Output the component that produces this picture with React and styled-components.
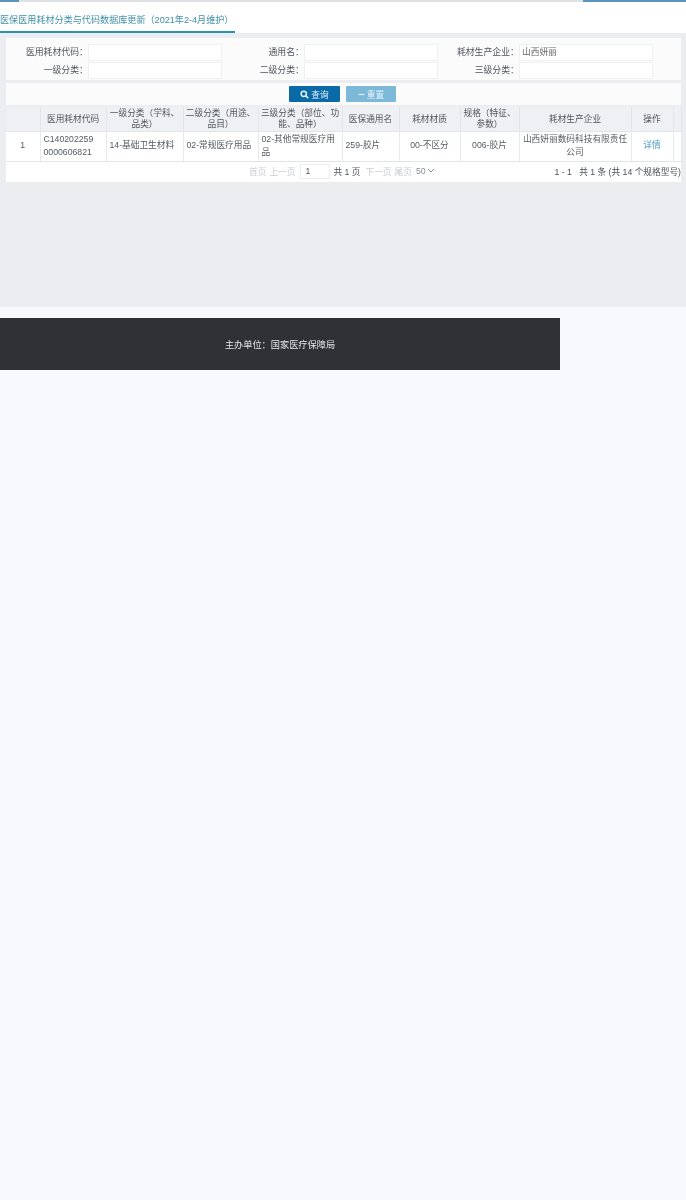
import styled, { createGlobalStyle } from 'styled-components'

const GlobalStyle = createGlobalStyle`
  html, body {
    margin: 0;
    padding: 0;
    background: #f8f9fd;
  }
  body {
    font-family: "Liberation Sans", "Noto Sans CJK SC", sans-serif;
    font-size: 8.7px;
    color: #50555b;
  }
`

const Page = styled.div`
  width: 686px;
  height: 1200px;
  overflow: hidden;
  background: #f8f9fd;
  filter: blur(0.45px);
`

const TopEdge = styled.div`
  display: flex;
  justify-content: space-between;
  height: 2px;
  background: #dfe1e4;
`

const EdgeTab = styled.div`
  width: ${p => p.$width}px;
  background: #5b93bd;
`

const TitleBar = styled.div`
  height: 31px;
  background: #fff;
  box-sizing: border-box;
`

const Title = styled.div`
  display: inline-block;
  box-sizing: border-box;
  width: 235px;
  height: 31px;
  padding-top: 12px;
  line-height: 13px;
  font-size: 9.1px;
  white-space: nowrap;
  color: #3f8fa8;
  border-bottom: 2px solid #2b93ad;
`

const Content = styled.div`
  box-sizing: border-box;
  height: 274px;
  padding: 5px 5px 0 6px;
  background: #ecedf1;
`

const SearchPanel = styled.div`
  display: grid;
  grid-template-columns: 82px 134px 82px 134px 81px 134px;
  grid-auto-rows: 18px;
  align-items: start;
  padding: 6px 0 0;
  height: 36px;
  background: #fbfbfc;
`

const Label = styled.label`
  line-height: 16px;
  text-align: right;
  white-space: nowrap;
  font-size: 8.9px;
`

const Input = styled.div`
  box-sizing: border-box;
  height: 17px;
  padding-left: 2px;
  line-height: 14px;
  background: #fff;
  border: 1px solid #eef0f2;
  color: #666;
`

const ButtonRow = styled.div`
  display: flex;
  justify-content: center;
  gap: 6px;
  margin-top: 3px;
  padding: 3px 2px 1px 0;
  height: 18px;
  background: #fbfbfc;
`

const Button = styled.button`
  display: flex;
  align-items: center;
  justify-content: center;
  gap: 2px;
  width: ${p => p.$width}px;
  height: 16px;
  margin: 0;
  padding: 0;
  border: 0;
  border-radius: 1px;
  font: inherit;
  font-size: 8.7px;
  color: #e8f3fa;
  background: ${p => p.$light ? '#7cb8d8' : '#0a6aa8'};
`

const Grid = styled.div`
  margin-top: 2px;
  width: 675px;
  background: #fff;
`

const Table = styled.table`
  table-layout: fixed;
  border-collapse: collapse;
  width: 675px;
`

const Head = styled.th`
  height: 24px;
  padding: 1px 0 0;
  box-sizing: border-box;
  font-weight: 400;
  line-height: 11px;
  text-align: center;
  white-space: pre-line;
  color: #50555b;
  background: #eff0f4;
  border-right: 1px solid #e2e4e8;
  border-bottom: 1px solid #e2e4e8;
`

const Cell = styled.td`
  height: 30px;
  padding: 0 3px 1px;
  box-sizing: border-box;
  line-height: 13px;
  text-align: ${p => p.$left ? 'left' : 'center'};
  color: #555a60;
  border-right: 1px solid #e8e9ec;
  border-bottom: 1px solid #e2e4e8;
`

const DetailLink = styled.a`
  color: #4a9cc4;
`

const Pager = styled.div`
  display: flex;
  align-items: center;
  height: 20px;
  padding-bottom: 1px;
  box-sizing: border-box;
`

const PagerLinks = styled.div`
  display: flex;
  align-items: center;
  margin-left: 243px;
  white-space: nowrap;
`

const Faded = styled.span`
  margin: 0 ${p => p.$after || 0}px 0 ${p => p.$before || 0}px;
  color: #c8cbd0;
`

const PageBox = styled.div`
  box-sizing: border-box;
  width: 30px;
  height: 15px;
  margin: 0 3px 0 5px;
  padding-left: 4px;
  line-height: 13px;
  border: 1px solid #eceef0;
`

const SizeSelect = styled.div`
  display: flex;
  align-items: center;
  gap: 1px;
  margin-left: 4px;
  color: #8a8f95;
`

const Summary = styled.div`
  margin-left: auto;
  white-space: nowrap;
  color: #4c5157;
`

const Footer = styled.div`
  display: flex;
  align-items: center;
  justify-content: center;
  width: 560px;
  height: 52px;
  margin-top: 11px;
  font-size: 9.2px;
  color: #e6e6e8;
  background: #2f3134;
`

const columns = [34, 66, 77, 75, 84, 57, 61, 59, 112, 42, 8]

const headers = [
  '',
  '医用耗材代码',
  '一级分类（学科、\n品类）',
  '二级分类（用途、\n品目）',
  '三级分类（部位、功\n能、品种）',
  '医保通用名',
  '耗材材质',
  '规格（特征、\n参数）',
  '耗材生产企业',
  '操作',
  '',
]

const fields = [
  ['医用耗材代码：', '', '通用名：', '', '耗材生产企业：', '山西妍丽'],
  ['一级分类：', '', '二级分类：', '', '三级分类：', ''],
]

const App = () => (
  <Page>
    <GlobalStyle />
    <TopEdge>
      <EdgeTab $width={19} />
      <EdgeTab $width={103} />
    </TopEdge>
    <TitleBar>
      <Title>医保医用耗材分类与代码数据库更新（2021年2-4月维护）</Title>
    </TitleBar>
    <Content>
      <SearchPanel>
        {fields.flat().map((text, i) => (
          i % 2 === 0
            ? <Label key={i}>{text}</Label>
            : <Input key={i}>{text}</Input>
        ))}
      </SearchPanel>
      <ButtonRow>
        <Button $width={51}>
          <svg width="9" height="9" viewBox="0 0 24 24" fill="none" stroke="#e8f3fa" strokeWidth="4">
            <circle cx="10" cy="10" r="7" />
            <path d="M15 15l7 7" />
          </svg>
          查询
        </Button>
        <Button $width={50} $light>
          <svg width="7" height="7" viewBox="0 0 24 24" fill="none" stroke="#e8f3fa" strokeWidth="4">
            <path d="M2 12h20" />
          </svg>
          重置
        </Button>
      </ButtonRow>
      <Grid>
        <Table>
          <colgroup>
            {columns.map((w, i) => <col key={i} style={{ width: w }} />)}
          </colgroup>
          <thead>
            <tr>
              {headers.map((text, i) => <Head key={i}>{text}</Head>)}
            </tr>
          </thead>
          <tbody>
            <tr>
              <Cell>1</Cell>
              <Cell $left>C140202259<br />0000606821</Cell>
              <Cell $left>14-基础卫生材料</Cell>
              <Cell $left>02-常规医疗用品</Cell>
              <Cell $left>02-其他常规医疗用品</Cell>
              <Cell $left>259-胶片</Cell>
              <Cell>00-不区分</Cell>
              <Cell>006-胶片</Cell>
              <Cell>山西妍丽数码科技有限责任公司</Cell>
              <Cell><DetailLink>详情</DetailLink></Cell>
              <Cell />
            </tr>
          </tbody>
        </Table>
        <Pager>
          <PagerLinks>
            <Faded $after={3}>首页</Faded>
            <Faded>上一页</Faded>
            <PageBox>1</PageBox>
            共 1 页
            <Faded $before={5} $after={3}>下一页</Faded>
            <Faded>尾页</Faded>
            <SizeSelect>
              50
              <svg width="8" height="6" viewBox="0 0 8 6" fill="none" stroke="#8a8f95" strokeWidth="1">
                <path d="M1 1l3 3 3-3" />
              </svg>
            </SizeSelect>
          </PagerLinks>
          <Summary>1 - 1 &nbsp; 共 1 条 (共 14 个规格型号)</Summary>
        </Pager>
      </Grid>
    </Content>
    <Footer>主办单位：国家医疗保障局</Footer>
  </Page>
)

export default App
